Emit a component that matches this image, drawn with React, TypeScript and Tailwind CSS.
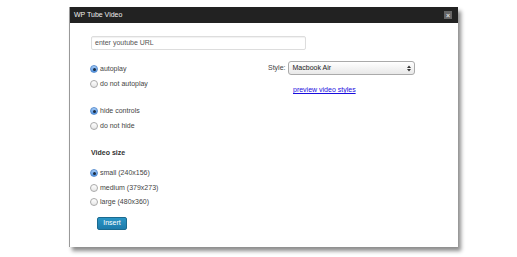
import React from 'react';

function Radio({ label, checked = false }: { label: string; checked?: boolean }) {
  return (
    <label className="flex h-[14.5px] items-center">
      <span
        className={`flex h-[8px] w-[8px] items-center justify-center rounded-full border ${
          checked
            ? 'border-[#5a8fd0] bg-gradient-to-b from-[#a9cdf5] to-[#4a90e2]'
            : 'border-[#aaa] bg-gradient-to-b from-white to-[#e6e6e6]'
        }`}
      >
        {checked && <span className="h-[3px] w-[3px] rounded-full bg-[#1a2a40]" />}
      </span>
      <span className="ml-[2px]">{label}</span>
    </label>
  );
}

export default function App() {
  return (
    <div className="h-[257px] w-[517px] bg-white font-['Liberation_Sans',Arial,sans-serif] text-[7px] text-[#444]">
      <div className="pt-[7px] pl-[69px]">
        <div className="flex h-[240px] w-[389px] flex-col border-l border-[#999] bg-white shadow-[3px_4px_4px_rgba(0,0,0,0.45)]">
          {/* title bar */}
          <div className="flex h-[16px] items-center justify-between bg-[#222] pr-[6px] pl-[4px]">
            <span className="text-[7px] text-[#eee]">WP Tube Video</span>
            <span className="flex h-[8px] w-[8px] items-center justify-center bg-[#666] text-[7px] leading-none font-bold text-[#ddd]">
              ×
            </span>
          </div>

          <div className="flex flex-col pl-[20px]">
            <div className="mt-[13px] ml-[1px] flex h-[14px] w-[215px] items-center rounded-[2px] border border-[#ddd] pl-[3px] text-[#555] shadow-[inset_0_1px_1px_rgba(0,0,0,0.06)]">
              enter youtube URL
            </div>

            <div className="mt-[11px] flex">
              <div className="flex w-[178px] flex-col pt-[1px]">
                <Radio label="autoplay" checked />
                <Radio label="do not autoplay" />
                <div className="mt-[13px]">
                  <Radio label="hide controls" checked />
                  <Radio label="do not hide" />
                </div>
              </div>

              <div className="flex flex-col">
                <div className="flex h-[14px] items-center">
                  <span>Style:</span>
                  <div className="ml-[2px] flex h-[14px] w-[127px] items-center justify-between rounded-[3px] border border-[#aaa] bg-gradient-to-b from-white to-[#e8e8e8] pr-[3px] pl-[4px] text-[#222]">
                    <span>Macbook Air</span>
                    <svg width="4" height="7" viewBox="0 0 4 7">
                      <path d="M0 3 L2 0.5 L4 3 Z M0 4 L2 6.5 L4 4 Z" fill="#333" />
                    </svg>
                  </div>
                </div>
                <a className="mt-[10px] pl-[25px] text-[#1a0dde] underline">preview video styles</a>
              </div>
            </div>

            <div className="mt-[14px] ml-[1px] h-[12px] leading-[12px] font-bold text-[#333]">Video size</div>

            <div className="mt-[7px] flex flex-col">
              <Radio label="small (240x156)" checked />
              <Radio label="medium (379x273)" />
              <Radio label="large (480x360)" />
            </div>

            <button className="mt-[7px] ml-[7px] flex h-[13px] w-[30px] items-center justify-center rounded-[2px] border border-[#1b6a8f] bg-gradient-to-b from-[#2a95c5] to-[#1e7cac] text-[7px] text-white">
              Insert
            </button>
          </div>
        </div>
      </div>
    </div>
  );
}
